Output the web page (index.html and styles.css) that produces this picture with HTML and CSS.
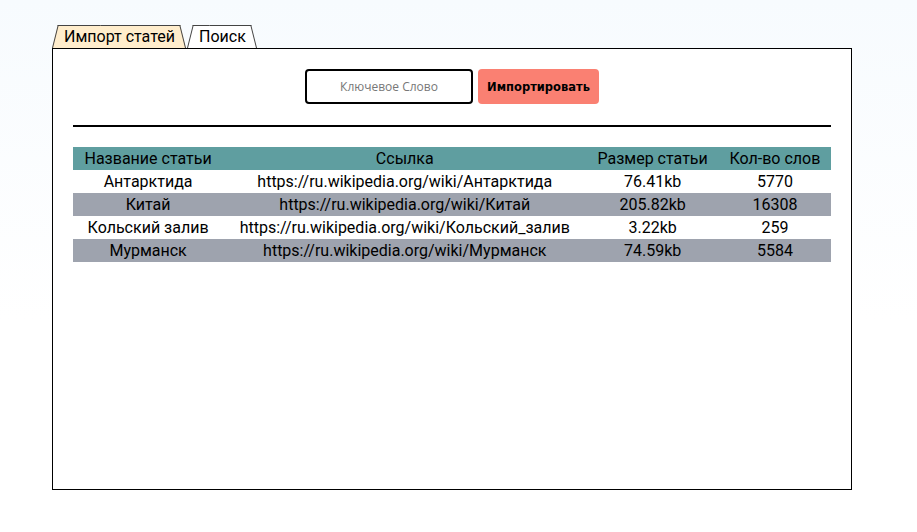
FILE: index.html
```html
<!DOCTYPE html>
<html lang="ru">
<head>
<meta charset="utf-8">
<title>Импорт статей</title>
<link rel="stylesheet" href="styles.css">
</head>
<body>
<div class="app">
  <div class="tabs">
    <div class="tab tab-active">Импорт статей</div>
    <div class="tab">Поиск</div>
  </div>
  <div class="panel">
    <div class="controls">
      <input class="keyword" type="text" placeholder="Ключевое Слово">
      <button class="import-btn" type="button">Импортировать</button>
    </div>
    <hr class="divider">
    <table class="articles">
      <thead>
        <tr><th>Название статьи</th><th>Ссылка</th><th>Размер статьи</th><th>Кол-во слов</th></tr>
      </thead>
      <tbody>
        <tr><td>Антарктида</td><td>https://ru.wikipedia.org/wiki/Антарктида</td><td>76.41kb</td><td>5770</td></tr>
        <tr><td>Китай</td><td>https://ru.wikipedia.org/wiki/Китай</td><td>205.82kb</td><td>16308</td></tr>
        <tr><td>Кольский залив</td><td>https://ru.wikipedia.org/wiki/Кольский_залив</td><td>3.22kb</td><td>259</td></tr>
        <tr><td>Мурманск</td><td>https://ru.wikipedia.org/wiki/Мурманск</td><td>74.59kb</td><td>5584</td></tr>
      </tbody>
    </table>
  </div>
</div>
</body>
</html>
```
FILE: styles.css
```css
html, body {
  margin: 0;
  padding: 0;
}
body {
  min-height: 532px;
  background: linear-gradient(#f7fbfe, #ffffff 60%);
  font-family: Roboto, "Liberation Sans", sans-serif;
  color: #000;
}
.app {
  padding: 25px 0 0 52px;
}
.tabs {
  display: flex;
  gap: 1px;
  padding-left: 0;
  height: 23px;
}
.tab {
  position: relative;
  isolation: isolate;
  height: 23px;
  line-height: 23px;
  padding: 0 11px 0 12px;
  font-size: 16px;
  box-sizing: border-box;
}
.tab::before,
.tab::after {
  content: "";
  position: absolute;
  top: 0;
  bottom: 0;
  width: 60%;
  z-index: -1;
  background: #ffffff;
  border-top: 1px solid #444;
  box-sizing: border-box;
}
.tab::before {
  left: 0;
  border-left: 1px solid #444;
  transform-origin: bottom left;
  transform: skewX(-14deg);
}
.tab::after {
  right: 0;
  border-right: 1px solid #444;
  transform-origin: bottom right;
  transform: skewX(14deg);
}
.tab-active::before,
.tab-active::after {
  background: #ffedcc;
}
.panel {
  width: 800px;
  height: 442px;
  box-sizing: border-box;
  border: 1px solid #000;
  background: #fff;
  padding: 20px;
}
.controls {
  display: flex;
  justify-content: center;
  gap: 5px;
  height: 35px;
}
.keyword {
  width: 168px;
  height: 35px;
  box-sizing: border-box;
  border: 2px solid #000;
  border-radius: 4px;
  background: #fff;
  text-align: center;
  font-family: "Open Sans", sans-serif;
  font-size: 12px;
  padding: 0 6px;
  outline: none;
}
.keyword::placeholder {
  color: #777;
}
.import-btn {
  width: 121px;
  height: 35px;
  border: none;
  border-radius: 4px;
  background: #fa8072;
  color: #000;
  font-family: "DejaVu Sans", sans-serif;
  font-weight: bold;
  font-size: 11.5px;
  padding: 0;
}
.divider {
  margin: 21px 0 0;
  border: none;
  height: 2px;
  background: #000;
}
.articles {
  margin-top: 20px;
  width: 100%;
  border-collapse: collapse;
  font-size: 16px;
}
.articles th,
.articles td {
  padding: 0 8px;
  text-align: center;
  font-weight: normal;
  white-space: nowrap;
  height: 23px;
  line-height: 22px;
}
.articles thead tr {
  background: #5f9ea0;
}
.articles tbody tr:nth-child(even) {
  background: #9ea3ae;
}
```
